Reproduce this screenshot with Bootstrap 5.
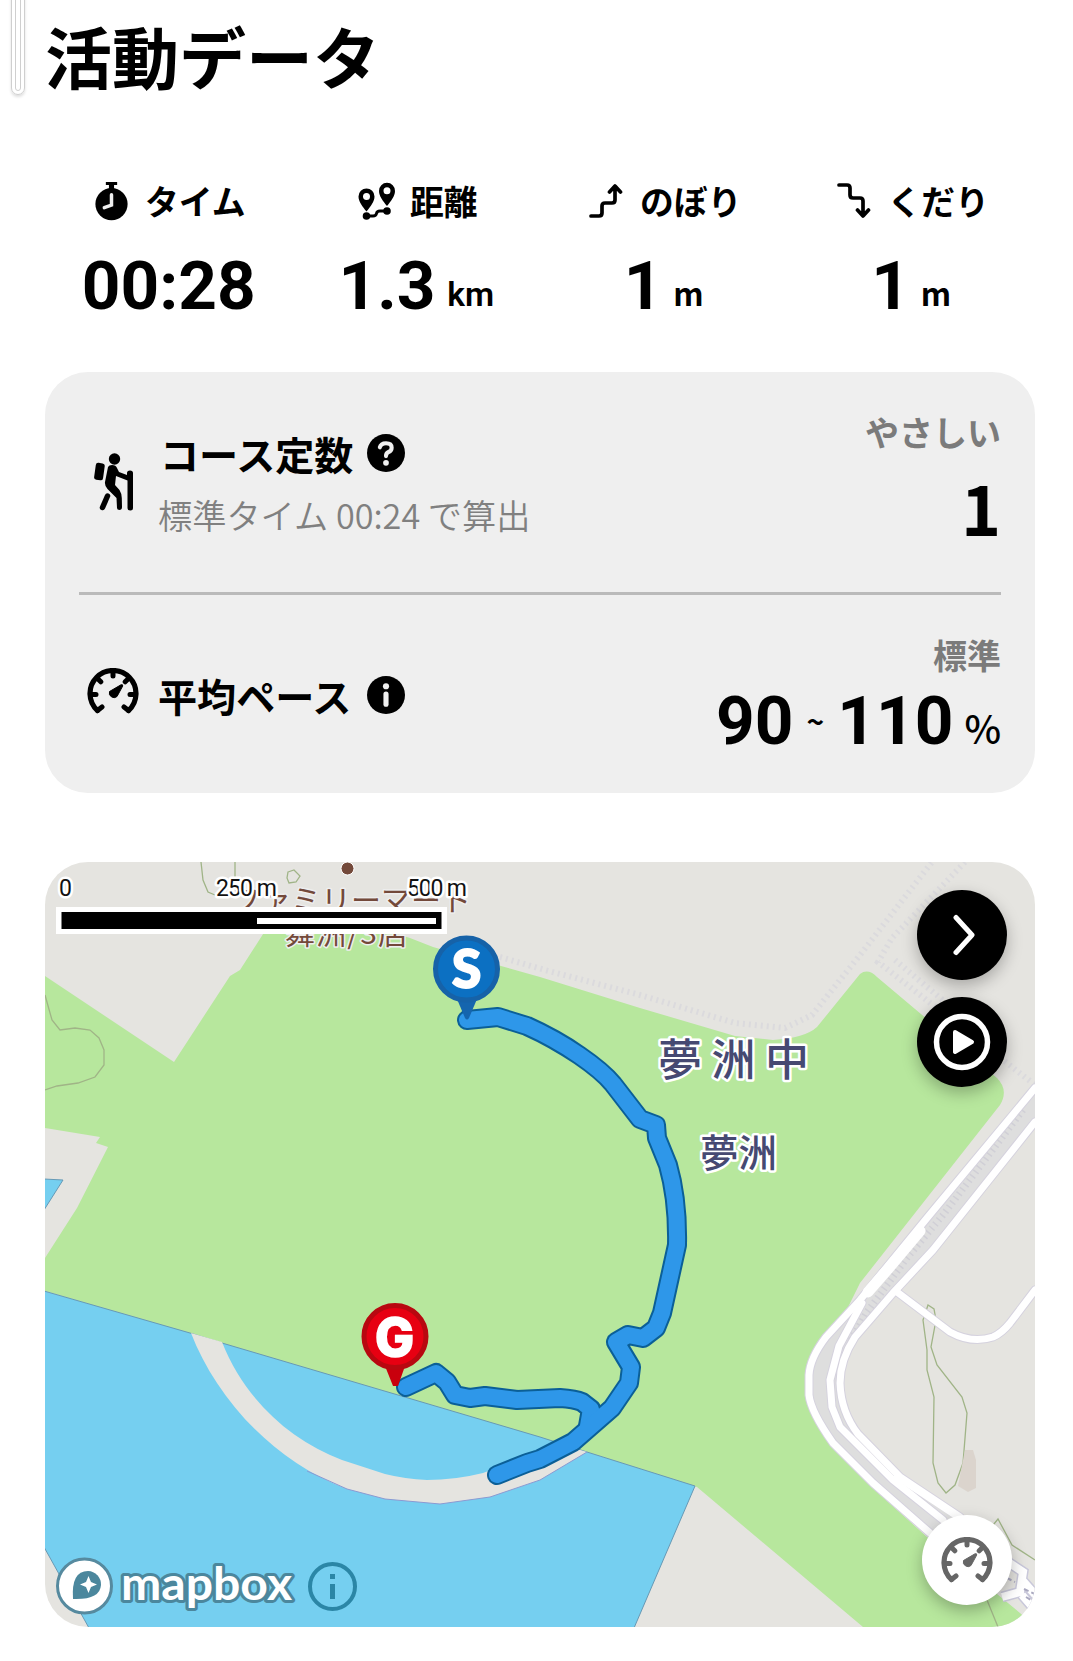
<!DOCTYPE html>
<html lang="ja">
<head>
    <meta charset="UTF-8">
    <meta name="viewport" content="width=device-width, initial-scale=1.0">
    <title>活動データ</title>
    <link rel="stylesheet" href="https://cdn.jsdelivr.net/npm/bootstrap@5.3.2/dist/css/bootstrap.min.css">
    <style>
        body{
            font-family: "Noto Sans CJK JP", sans-serif;
            color: #000;
            background: #fff;
            overflow: hidden;
        }
        main{
            width: 1073px;
            padding: 0 38px 0 45px;
        }
        svg{ display: block; flex: none; }

        .barra{
            top: -30px;
            left: 11px;
            width: 14px;
            height: 125px;
            border: 1.5px solid #cfcfcf;
            border-radius: 8px;
            padding: 0 3px 3px;
            box-shadow: 0 2px 3px #0002;
        }
        .barra div{
            height: 100%;
            border: 1.5px solid #cfcfcf;
            border-radius: 4px;
        }

        h1{ font-size: 67px; line-height: 110px; height: 171px; }

        .stats{ height: 201px; }
        .stat-label{ font-size: 33.8px; line-height: 60px; height: 60px; padding-left: 3px; }
        .stat-label svg{ margin-right: 17px; }
        .valor{ font-family: Roboto, sans-serif; font-weight: 700; font-size: 67.5px; line-height: 110px; height: 110px; white-space: nowrap; }
        .unidade{ font-size: 33.5px; font-weight: 600; position: relative; top: -3px; margin-left: -5px; }
        .unidade-m{ font-family: "Noto Sans CJK JP", sans-serif; font-weight: 700; font-size: 31.5px; line-height: 1; margin-left: -6px; }

        .painel{
            height: 421px;
            padding: 0 34px;
            border-radius: 43px;
            background: #efefef;
        }
        .linha1{ height: 223px; border-bottom: 3px solid #bababa; }
        .linha2{ height: 198px; }
        .titulo{ font-size: 39.1px; font-weight: 700; line-height: 56px; }
        .sub{ font-size: 34.2px; font-weight: 350; line-height: 50px; color: #808080; margin: 8px 0 0 -2px; }
        .nivel{ font-size: 34px; font-weight: 700; line-height: 50px; color: #7b7b7b; }
        .faixa span{ font-family: "Noto Sans CJK JP", sans-serif; line-height: 1; }
        .faixa .til{ font-size: 30px; margin: 0 13px; position: relative; top: -11px; }
        .faixa .pct{ font-size: 39px; font-weight: 500; margin-left: 11px; }

        .mapa{
            margin-top: 69px;
            width: 990px;
            height: 765px;
            border-radius: 43px;
            overflow: hidden;
        }
        .botao{
            width: 90px;
            height: 90px;
            border-radius: 50%;
            box-shadow: 0 6px 16px #0004;
        }
        .botoes{ top: 28px; right: 28px; gap: 17px; }
        .ritmo{ right: 23px; bottom: 22px; color: #666; }
    </style>
</head>
<body>
    <!-- símbolos usados mais de uma vez -->
    <svg width="0" height="0" class="position-absolute">
        <symbol id="gauge" viewBox="0 0 52 46">
            <path d="M10.500 42.500A23 23 0 1 1 41.500 42.500" fill="none" stroke="currentColor" stroke-width="5.200" stroke-linecap="round"/>
            <path d="M26 4v4M12 12l1.800 1.800M40 12l-1.800 1.800M4 26.500h5M48 26.500h-5M10.500 42.500l4.500-3.500M41.500 42.500L37 39" stroke="currentColor" stroke-width="5" stroke-linecap="round"/>
            <path d="M22.500 23.500L34 16.800q2.200-.6 1.700 1.300L30 28.500a4.700 4.700 0 0 1-7.500-5z" fill="currentColor" stroke="currentColor"/>
        </symbol>
    </svg>

    <div class="barra position-absolute"><div></div></div>

    <main>
        <h1 class="fw-bold m-0">活動データ</h1>

        <section class="stats row row-cols-4 g-0 text-center">
            <div class="col">
                <div class="stat-label fw-bold d-flex align-items-center justify-content-center">
                    <svg width="33" height="39" viewBox="0 0 32 38">
                        <path d="M10.500 0h11v3h-3v4h-5V3h-3z"/>
                        <circle cx="16" cy="21.500" r="15.700"/>
                        <path d="M16 12.500v10l-7 2.500" fill="none" stroke="#efefef" stroke-width="3.400" stroke-linecap="round"/>
                    </svg>
                    <span>タイム</span>
                </div>
                <div class="valor">00:28</div>
            </div>
            <div class="col">
                <div class="stat-label fw-bold d-flex align-items-center justify-content-center">
                    <svg width="38" height="39" viewBox="0 0 38 38" style="margin-right:14px">
                        <path fill-rule="evenodd" d="M8.500 6A8 8 0 0 0 .5 14c0 5 4 10 8 15 4-5 8-10 8-15a8 8 0 0 0-8-8zm0 4.500a3.500 3.500 0 1 1 0 7 3.500 3.500 0 0 1 0-7zM29 .3A8 8 0 0 0 21 8.500c0 5 4 10 8 15 4-5 8-10 8-15A8 8 0 0 0 29 .3zm0 4.500a3.500 3.500 0 1 1 0 7 3.500 3.500 0 0 1 0-7z"/>
                        <circle cx="8.500" cy="33.500" r="3.800"/><circle cx="29" cy="28.500" r="3.800"/>
                        <path d="M8 33.500h7q3 0 3.500-2.500t3.500-2.500h7" fill="none" stroke="#000" stroke-width="3"/>
                    </svg>
                    <span>距離</span>
                </div>
                <div class="valor">1.3 <span class="unidade">km</span></div>
            </div>
            <div class="col">
                <div class="stat-label fw-bold d-flex align-items-center justify-content-center">
                    <svg width="34" height="36" viewBox="0 0 34 36">
                        <path d="M2 33h8q3 0 3-3v-7q0-3 3-3h7q3 0 3-3V3M20.500 9L26 3l5.500 6" fill="none" stroke="#000" stroke-width="3.700" stroke-linecap="round" stroke-linejoin="round"/>
                    </svg>
                    <span>のぼり</span>
                </div>
                <div class="valor">1 <span class="unidade unidade-m">m</span></div>
            </div>
            <div class="col">
                <div class="stat-label fw-bold d-flex align-items-center justify-content-center">
                    <svg width="34" height="36" viewBox="0 0 34 36">
                        <path d="M2 2h8q3 0 3 3v7q0 3 3 3h7q3 0 3 3v14M20.500 27l5.500 6 5.500-6" fill="none" stroke="#000" stroke-width="3.700" stroke-linecap="round" stroke-linejoin="round"/>
                    </svg>
                    <span>くだり</span>
                </div>
                <div class="valor">1 <span class="unidade unidade-m">m</span></div>
            </div>
        </section>

        <section class="painel">
            <div class="linha1 d-flex">
                <svg width="40" height="58" viewBox="0 0 40 58" style="margin:81px 26px 0 15px">
                    <circle cx="20.500" cy="6" r="5.700"/>
                    <rect x="1" y="10" width="9" height="17" rx="2.500" transform="rotate(8 5 18)"/>
                    <path d="M14 14q1-2 4-2 4 0 5 3l2 4 8 3v-2q0-2.500 3-2.500t3 2.500v35q0 2.500-2.700 2.500T33.500 55V27.500L22 23l-1 9 4.500 5q2 3 2.300 8l.2 9q0 3-2.500 3T23 55l-.5-10-9-9q-3-3-2.500-7z"/>
                    <path d="M13.500 43L8.500 54.500" stroke="#000" stroke-width="5.500" stroke-linecap="round"/>
                </svg>
                <div style="padding-top:53px">
                    <div class="d-flex align-items-center">
                        <span class="titulo">コース定数</span>
                        <svg width="38" height="38" viewBox="0 0 37 37" style="margin-left:14px">
                            <circle cx="18.500" cy="18.500" r="18.500"/>
                            <path d="M12.500 13q1-4 6-4 5.500 0 5.500 4.300 0 3-3 4.200-2.500 1-2.500 4" fill="none" stroke="#efefef" stroke-width="4" stroke-linecap="round"/>
                            <circle cx="18.500" cy="28" r="2.800" fill="#efefef"/>
                        </svg>
                    </div>
                    <div class="sub">標準タイム 00:24 で算出</div>
                </div>
                <div class="ms-auto text-end" style="padding-top:35px">
                    <div class="nivel">やさしい</div>
                    <div class="fw-bold" style="font-size:68px;line-height:100px">1</div>
                </div>
            </div>
            <div class="linha2 d-flex">
                <svg width="52" height="46" style="margin:73px 19px 0 8px"><use href="#gauge"/></svg>
                <div class="d-flex align-items-center" style="height:56px;margin-top:72px">
                    <span class="titulo">平均ペース</span>
                    <svg width="38" height="38" viewBox="0 0 37 37" style="margin-left:16px">
                        <circle cx="18.500" cy="18.500" r="18.500"/>
                        <circle cx="18.500" cy="10" r="3" fill="#efefef"/>
                        <path d="M18.500 17.500v10" stroke="#efefef" stroke-width="5" stroke-linecap="round"/>
                    </svg>
                </div>
                <div class="ms-auto text-end" style="padding-top:35px">
                    <div class="nivel">標準</div>
                    <div class="valor faixa d-flex align-items-baseline justify-content-end" style="line-height:81px">
                        90<span class="til">~</span>110<span class="pct">%</span>
                    </div>
                </div>
            </div>
        </section>

        <section class="mapa position-relative">
            <svg width="990" height="765" viewBox="45 862 990 765">
                <rect x="45" y="862" width="990" height="765" fill="#e5e4e0"/>

                <!-- ferrovias tracejadas -->
                <g fill="none" stroke="#dbdadd" stroke-width="6" stroke-dasharray="2 4">
                    <path d="M500 957L545 970 640 995 735 1023 785 1028 812 1015 860 955 932 862"/>
                    <path d="M965 862L892 938 878 962 1035 1085M895 960L990 1040"/>
                </g>

                <path fill="#b7e79d" d="M45 976L174 1062 230 976 240 970 265 931 300 905 410 938 433 947 540 977 640 1008 735 1036 773 1040Q805 1038 817 1027L860 974Q868 968 877 977L997 1078Q1009 1090 1000 1105L860 1283 812 1380 815 1417 873 1488 927 1537 980 1580 1020 1613 1035 1627H863L697 1487 587 1452 190 1334 45 1291V1258L77 1208 108 1147 96 1143 100 1137 45 1128z"/>
                <path fill="#75cff0" stroke="#6799b5" stroke-width="1" d="M44 1291L190 1333 222 1343 540 1437 587 1452 695 1486 634 1628H89L44 1547zM44 1179l19 1-19 30z"/>
                <path fill="#e5e4e0" d="M191 1333C215 1395 270 1460 347 1489L385 1499 440 1504 490 1497 540 1480 587 1452 560 1444 483 1473Q455 1480 427 1480 405 1479 385 1474L342 1460C290 1440 245 1400 222 1342z"/>
                <path fill="none" stroke="#8b9ad2" d="M307 1471L347 1489 385 1499 440 1504 490 1497 540 1480 587 1452"/>

                <!-- curvas de nível -->
                <g fill="none" stroke="#a0b487" stroke-width="1.300">
                    <path d="M45 995L52 1020 60 1030 75 1028 90 1030 99 1038 104 1050V1065L95 1077 78 1083 57 1086 45 1090"/>
                    <path d="M201 862L203 880 208 892 215 895M235 862V880M288 872l6-2 6 6-4 6-7 1-2-5z"/>
                    <path d="M928 1305L923 1320 927 1350V1370L934 1397 933 1463 938 1483 946 1493 955 1485 963 1463 967 1413 962 1397 937 1365 931 1347 936 1320 934 1309z"/>
                    <path d="M985 1535L998 1519 1012 1545 1035 1560M987 1600L998 1627"/>
                </g>
                <path fill="#dbd4cd" d="M965 1450l8 0 3 10v28l-8 4-10-6z"/>

                <!-- ruas -->
                <path fill="#dedede" d="M1035 1088L927 1218 860 1300 820 1343 809 1383 813 1410 833 1443 930 1533 960 1517 900 1477 853 1430 840 1373 850 1343 933 1250 1035 1118z"/>
                <path fill="none" d="M1023 1110L943 1215 907 1258 867 1312 850 1342" stroke="#d0cfd6" stroke-width="7" stroke-dasharray="1.500 4"/>
                <g fill="none" stroke-linejoin="round" stroke-linecap="round">
                    <g stroke="#d5d2de" stroke-width="9">
                        <path d="M1035 1088L927 1218 860 1300 826 1337Q810 1358 809 1375V1395Q811 1412 833 1443L873 1483 930 1533"/>
                        <path d="M1035 1122L933 1250 893 1293 855 1337Q840 1360 840 1383 841 1412 858 1434L900 1477 960 1517"/>
                        <path d="M862 1303L839 1346 830 1380 832 1407 840 1427 893 1480 943 1520"/>
                        <path d="M897 1292L950 1332Q972 1344 993 1337 1002 1333 1010 1323L1035 1290"/>
                    </g>
                    <g stroke="#fff" stroke-width="7">
                        <path d="M1035 1088L927 1218 860 1300 826 1337Q810 1358 809 1375V1395Q811 1412 833 1443L873 1483 930 1533"/>
                        <path d="M1035 1122L933 1250 893 1293 855 1337Q840 1360 840 1383 841 1412 858 1434L900 1477 960 1517"/>
                        <path d="M862 1303L839 1346 830 1380 832 1407 840 1427 893 1480 943 1520"/>
                        <path d="M897 1292L950 1332Q972 1344 993 1337 1002 1333 1010 1323L1035 1290"/>
                    </g>
                    <path d="M920 1231L888 1269 868 1292" stroke="#fff" stroke-width="11"/>
                    <path d="M897 1477L965 1522" stroke="#fff" stroke-width="6"/>
                </g>
                <path d="M1005 1560L1023 1572 1020 1592 1002 1597M1022 1580L1040 1600M1022 1595L1035 1610" fill="none" stroke="#c9c8da" stroke-width="11"/>
                <path d="M1005 1560L1023 1572 1020 1592 1002 1597M1022 1580L1040 1600M1022 1595L1035 1610" fill="none" stroke="#fff" stroke-width="8"/>
                <path d="M1007 1578l8 4M1024 1589l11 5M1026 1597l10 6" stroke="#aaa9c0" stroke-width="2" stroke-dasharray="5 3"/>

                <!-- nomes no mapa -->
                <g font-family="Noto Sans CJK JP, sans-serif" paint-order="stroke" stroke-linejoin="round">
                    <g font-size="30" fill="#73493a" stroke="#eee" stroke-width="3">
                        <text x="231" y="911" textLength="240">ファミリーマート</text>
                        <text x="285" y="944" textLength="123">舞洲/3店</text>
                    </g>
                    <g fill="#464972" stroke="#fff" stroke-width="5">
                        <text x="658" y="1076" font-size="44" textLength="151" font-weight="500">夢洲中</text>
                        <text x="700" y="1167" font-size="38.500" font-weight="500">夢洲</text>
                    </g>
                </g>
                <circle cx="347.500" cy="868.500" r="6.500" fill="#73493a" stroke="#fff"/>

                <!-- percurso -->
                <g fill="none" stroke-linecap="round" stroke-linejoin="round">
                    <g stroke="#0b5f97" stroke-width="20">
                        <path d="M406 1387L436 1373 447 1382 455 1395 470 1398 485 1396 517 1400 560 1398 Q575 1399 582 1402L591 1409 588 1426"/>
                        <path d="M467 1020L498 1017 527 1026C565 1043 600 1068 613 1084L640 1119 656 1125 657 1138 668 1165Q678 1200 677 1245L662 1313 656 1328 643 1338 628 1335 616 1342 631 1367 629 1383 612 1408 573 1442 540 1459 527 1463 497 1475"/>
                    </g>
                    <g stroke="#2e97e9" stroke-width="16">
                        <path d="M406 1387L436 1373 447 1382 455 1395 470 1398 485 1396 517 1400 560 1398 Q575 1399 582 1402L591 1409 588 1426"/>
                        <path d="M467 1020L498 1017 527 1026C565 1043 600 1068 613 1084L640 1119 656 1125 657 1138 668 1165Q678 1200 677 1245L662 1313 656 1328 643 1338 628 1335 616 1342 631 1367 629 1383 612 1408 573 1442 540 1459 527 1463 497 1475"/>
                    </g>
                </g>

                <!-- largada e chegada -->
                <g text-anchor="middle" fill="#fff">
                    <path d="M457 999L465 1018q2 3 4 0L477 999z" fill="#1565ae"/>
                    <circle cx="466.500" cy="969" r="31" fill="#0c70c2" stroke="#1662a8" stroke-width="5"/>
                    <text x="466.500" y="988" font-family="Lato, sans-serif" font-size="53" font-weight="900" stroke="#fff" stroke-width="2">S</text>
                    <path d="M385 1366L393 1386h5L405 1366z" fill="#c9000d"/>
                    <circle cx="395" cy="1336.500" r="31" fill="#e70012" stroke="#b80810" stroke-width="5"/>
                    <text x="394.500" y="1355.500" font-family="Inter, sans-serif" font-size="52" font-weight="800" stroke="#fff" stroke-width="1.500">G</text>
                </g>

                <!-- escala -->
                <g font-family="Roboto, sans-serif" font-size="23" fill="#111" stroke="#fff" stroke-width="5" paint-order="stroke" stroke-linejoin="round">
                    <text x="59" y="896">0</text>
                    <text x="216" y="896" textLength="61">250 m</text>
                    <text x="407" y="896" textLength="60">500 m</text>
                </g>
                <rect x="56" y="907" width="391" height="27" fill="#fff"/>
                <rect x="61.500" y="912" width="380" height="17"/>
                <rect x="257" y="918" width="179" height="6" fill="#fff"/>

                <!-- mapbox -->
                <circle cx="84.500" cy="1586" r="27" fill="#fff" stroke="#568a9f" stroke-width="3"/>
                <path d="M73 1599Q71 1571 88 1571a13.500 13.500 0 0 1 13 14Q100 1600 73 1599z" fill="#4b879d"/>
                <path d="M88.500 1576l2.500 6 6 2.500-6 2.500-2.500 6-2.500-6-6-2.500 6-2.500z" fill="#fff"/>
                <text x="121" y="1599.500" font-family="Lato, sans-serif" font-size="46" font-weight="700" textLength="171" lengthAdjust="spacingAndGlyphs" fill="#fff" stroke="#4b879d" stroke-width="6" paint-order="stroke" stroke-linejoin="round">mapbox</text>
                <circle cx="332.500" cy="1586.500" r="22.500" fill="none" stroke="#2b86a6" stroke-width="4"/>
                <path d="M332.500 1574v5M332.500 1584v15" stroke="#2b86a6" stroke-width="5"/>
            </svg>

            <div class="botoes position-absolute d-flex flex-column">
                <div class="botao bg-black d-flex align-items-center justify-content-center">
                    <svg width="26" height="44" viewBox="0 0 26 44"><path d="M7 4.500L23 22 7 39.500" fill="none" stroke="#fff" stroke-width="5" stroke-linecap="round" stroke-linejoin="round"/></svg>
                </div>
                <div class="botao bg-black d-flex align-items-center justify-content-center">
                    <svg width="58" height="58" viewBox="0 0 58 58"><circle cx="29" cy="29" r="25.500" fill="none" stroke="#fff" stroke-width="5.500"/><path d="M22 19l17 10-17 10z" fill="#fff" stroke="#fff" stroke-width="4" stroke-linejoin="round"/></svg>
                </div>
            </div>
            <div class="botao ritmo position-absolute bg-white d-flex align-items-center justify-content-center">
                <svg width="52" height="46"><use href="#gauge"/></svg>
            </div>
        </section>
    </main>

    <script src="https://cdn.jsdelivr.net/npm/bootstrap@5.3.2/dist/js/bootstrap.bundle.min.js"></script>
</body>
</html>
